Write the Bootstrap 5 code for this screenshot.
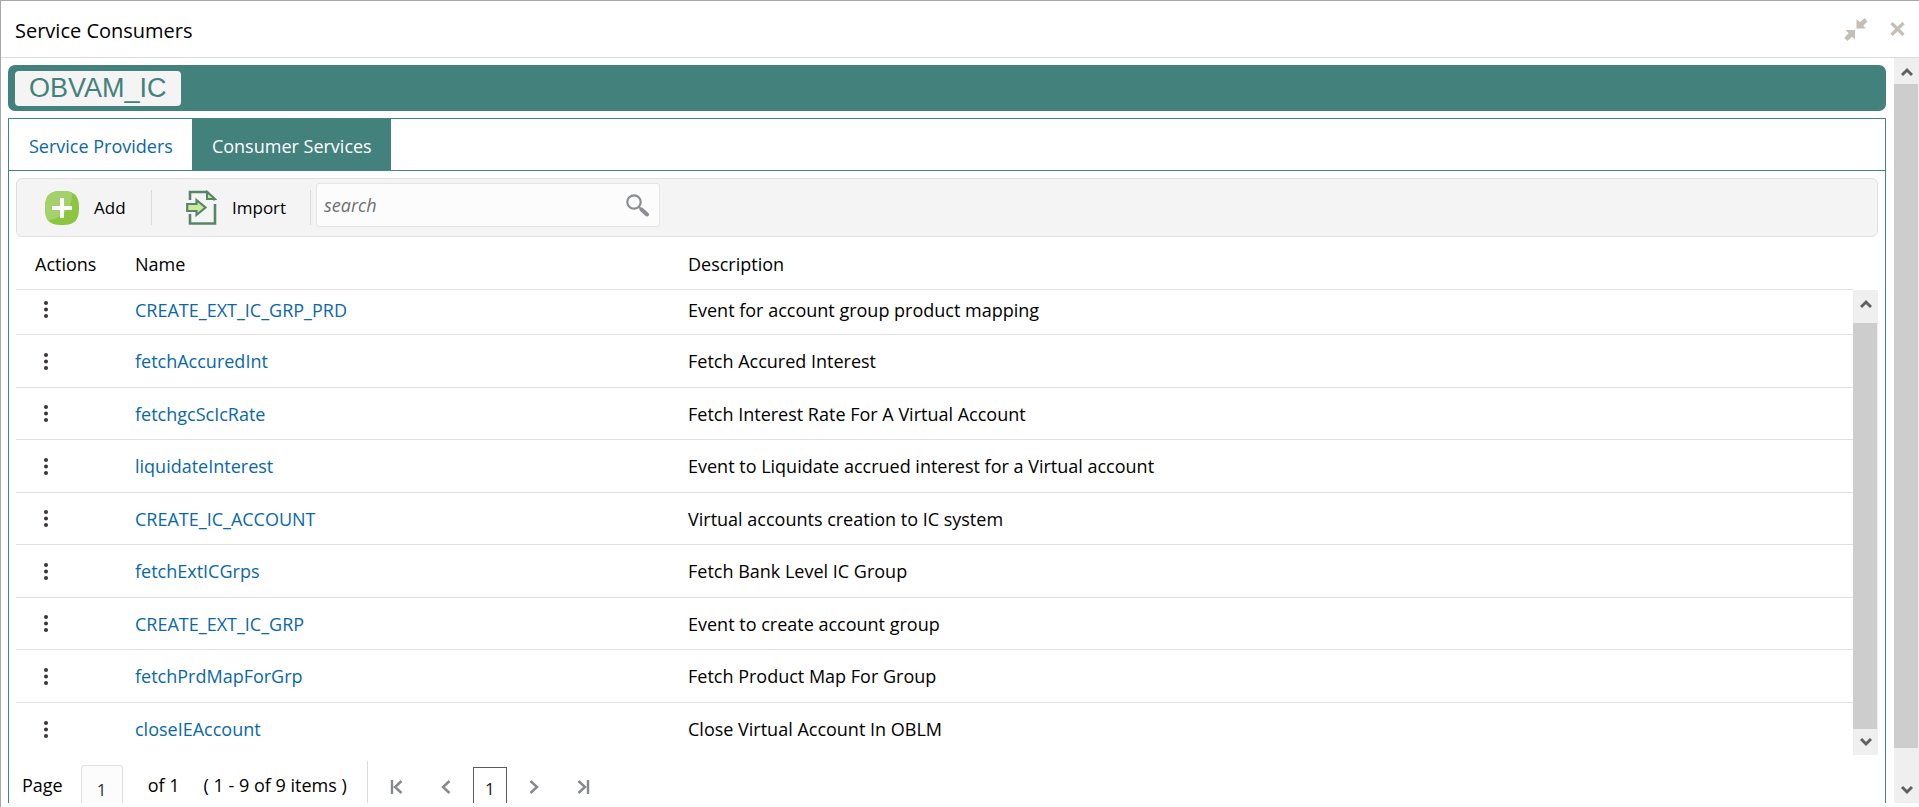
<!DOCTYPE html>
<html lang="en">
<head>
<meta charset="utf-8">
<meta name="viewport" content="width=device-width, initial-scale=1">
<title>Service Consumers</title>
<link href="https://cdn.jsdelivr.net/npm/bootstrap@5.3.0/dist/css/bootstrap.min.css" rel="stylesheet">
<style>
  :root { --teal: #43817d; --line: #e0e0e0; --link: #0968a8; --base: 18px; }
  body { font-family: "Open Sans", "Noto Sans", sans-serif; font-size: var(--base); line-height: 24px; color: #000; background: #fff; }
  a { color: var(--link); text-decoration: none; }
  svg { display: block; }
  .window { border-left: 1px solid #a8a8a8; border-top: 1px solid #a8a8a8; padding-bottom: 4px; }
  .window-head { height: 57px; padding: 0 14px; border-bottom: 1px solid #dcdcdc; }
  .window-head h1 { font-size: 20px; line-height: 28px; font-weight: 400; padding-top: 3px; }
  .plain-btn { border: 0; background: none; padding: 0; color: inherit; }
  .head-tools { gap: 22px; }
  .page-pane { padding: 7px 8px 0 7px; min-width: 0; }
  .title-band { background: var(--teal); border-radius: 7px; padding: 6px 7px 5px; }
  .title-chip { background: #f4f4f4; color: var(--teal); border-radius: 4px; font: 27px/35px "Liberation Sans", Arial, sans-serif; padding: 0 14px; }
  .panel { margin-top: 7px; border: 1px solid #43857c; border-bottom: 0; }
  .tab-strip { border-bottom: 1px solid #43857c; }
  .tab-strip a { padding: 15px 19px 12px 20px; border-radius: 0; }
  .tab-strip a.active { background: var(--teal); color: #fff; }
  .panel-body { padding: 7px 7px 0; }
  .toolbar { background: #f4f4f4; border: 1px solid var(--line); border-radius: 6px; height: 59px; }
  .tool-btn { height: 35px; margin-top: 11px; gap: 15px; border-right: 1px solid #dadada; font-size: 17px; }
  .tool-add { width: 135px; padding-left: 28px; }
  .tool-import { width: 159px; padding-left: 34px; }
  .search-box { width: 344px; height: 44px; margin: 4px 0 0 5px; background: #fcfcfc; border: 1px solid #e4e4e4; border-radius: 3px; padding: 0 10px 0 7px; }
  .search-box input { border: 0; background: none; outline: 0; padding: 0; min-width: 0; font-style: italic; }
  .search-box input::placeholder { color: #707070; }
  .services { table-layout: fixed; border-collapse: separate; border-spacing: 0; }
  .services th, .services td { font-weight: 400; padding: 0; border-bottom: 1px solid var(--line); }
  .services tr > :first-child { width: 119px; padding-left: 19px; }
  .services tr > :nth-child(2) { width: 553px; }
  .services thead th { height: 53px; padding-top: 2px; }
  .services tbody td { height: 53px; }
  .services tbody tr:nth-child(odd) td { height: 52px; }
  .services tbody tr:first-child td { height: 45px; padding-bottom: 5px; }
  .services tbody tr:last-child td { border-bottom: 0; }
  .dots { display: flex; align-items: center; justify-content: center; width: 22px; height: 24px; }
  .bar-track { width: 25px; background: #efefef; }
  .bar-thumb { background: #cdcdcd; margin-right: 1px; flex: 1; }
  .bar-track .plain-btn { display: flex; justify-content: center; color: #606060; }
  .pane-track .up { height: 26px; padding-top: 9px; }
  .pane-track .down { height: 55px; align-items: flex-end; padding-bottom: 8px; }
  .list-track { margin-top: 53px; }
  .list-track .up { height: 33px; padding-top: 9px; }
  .list-track .down { height: 26px; padding-top: 8px; }
  .pager { padding: 6px 0 0 6px; }
  .page-field { width: 42px; height: 48px; margin: 4px 25px 0 18px; border: 1px solid var(--line); border-radius: 3px; background: #fcfcfc; text-align: center; padding: 0; font-size: 17px; color: #333; }
  .pager-text { padding-top: 12px; }
  .pager-rule { width: 1px; height: 52px; background: #dadada; margin-left: 20px; }
  .pager-nav { color: #85888c; padding-left: 22px; }
  .pager-nav .outer-step, .pager-nav .inner-step { height: 16px; margin-top: 18px; }
  .pager-gap { gap: 38px; }
  .page-current { width: 34px; height: 44px; margin: 6px 22px 0; border: 1px solid #5c5c5c; color: #222; text-align: center; font-size: 17px; line-height: 42px; }
</style>
</head>
<body>
<div class="window vh-100 d-flex flex-column overflow-hidden">
  <header class="window-head d-flex align-items-center justify-content-between flex-shrink-0">
    <h1 class="m-0">Service Consumers</h1>
    <div class="head-tools d-flex align-items-center">
      <button class="plain-btn" type="button" aria-label="Collapse">
        <svg width="24" height="24" viewBox="0 0 24 24"><g fill="#c4beb7"><path d="M12.500 2v9.500H22l-2.800-2.800L23.500 4.500 20.500 1l-4.600 4.200z"/><path d="M1.500 13H11v9.500L8.200 19.700 3.500 24 .3 20.800l4.400-4.500z"/></g></svg>
      </button>
      <button class="plain-btn" type="button" aria-label="Close">
        <svg width="15" height="14" viewBox="0 0 15 14"><path d="M1.500 1l12 12M13.500 1l-12 12" stroke="#c4beb7" stroke-width="3.200"/></svg>
      </button>
    </div>
  </header>

  <div class="d-flex flex-grow-1 overflow-hidden">
    <main class="page-pane flex-grow-1 overflow-hidden">
      <div class="title-band d-flex"><div class="title-chip">OBVAM_IC</div></div>
      <section class="panel">
        <nav class="tab-strip d-flex">
          <a href="#providers">Service Providers</a>
          <a href="#services" class="active" aria-current="page">Consumer Services</a>
        </nav>
        <div class="panel-body">
          <div class="toolbar d-flex">
            <button type="button" class="plain-btn tool-btn tool-add d-flex align-items-center">
              <svg width="34" height="34" viewBox="0 0 34 34"><path d="M17 0C28 0 34 3 34 17S28 34 17 34 0 31 0 17 6 0 17 0z" fill="#8cc640"/><path d="M17 0c4 0 7 .4 9.500 1.200C29 13 20 27 3 29.500 1 27 0 23 0 17 0 3 6 0 17 0z" fill="#a5d16c"/><path d="M17 7v20M7 17h20" stroke="#fff" stroke-width="4"/></svg>
              <span>Add</span>
            </button>
            <button type="button" class="plain-btn tool-btn tool-import d-flex align-items-center">
              <svg width="31" height="35" viewBox="0 0 31 35" fill="none" stroke="#588568" stroke-width="2.600"><path d="M4 10V2h17l8 8M4 24v9.500h25V14"/><path d="M21 2v7h8z" fill="#c9ec9c" stroke-width="2"/><path d="M1.200 14h9.300V10l9 7.500-9 7.500v-4H1.200z" fill="#c9ec9c" stroke-width="2.200"/></svg>
              <span>Import</span>
            </button>
            <div class="search-box d-flex align-items-center">
              <input class="flex-grow-1" type="text" placeholder="search" aria-label="Search services">
              <button type="button" class="plain-btn" aria-label="Search"><svg width="23" height="23" viewBox="0 0 23 23" fill="none" stroke="#8a8e92"><circle cx="8" cy="8" r="6.700" stroke-width="2.200"/><path d="M13 13l2.500 2.500" stroke-width="2"/><path d="M15.500 15.500l5.500 5" stroke-width="4" stroke-linecap="round"/></svg></button>
            </div>
          </div>

          <div class="d-flex">
            <table class="services flex-grow-1">
              <thead><tr><th>Actions</th><th>Name</th><th>Description</th></tr></thead>
              <tbody id="service-rows"></tbody>
            </table>
            <div class="bar-track list-track d-flex flex-column">
              <button type="button" class="plain-btn up" aria-label="Scroll list up"><svg width="12" height="10" viewBox="0 0 12 10"><path d="M1 8l5-5 5 5" fill="none" stroke="currentColor" stroke-width="3"/></svg></button>
              <div class="bar-thumb"></div>
              <button type="button" class="plain-btn down" aria-label="Scroll list down"><svg width="12" height="10" viewBox="0 0 12 10"><path d="M1 2l5 5 5-5" fill="none" stroke="currentColor" stroke-width="3"/></svg></button>
            </div>
          </div>

          <div class="pager d-flex">
            <label class="pager-text" for="page-no">Page</label>
            <input class="page-field" id="page-no" type="text" value="1">
            <span class="pager-text">of 1</span>
            <span class="pager-text ms-4">( 1 - 9 of 9 items )</span>
            <div class="pager-rule"></div>
            <div class="pager-nav d-flex">
              <div class="pager-gap d-flex">
                <button type="button" class="plain-btn outer-step" aria-label="First page"><svg width="13" height="16" viewBox="0 0 13 16" fill="none" stroke="currentColor" stroke-width="2.400"><path d="M2 1v14M11.500 2L5 8l6.500 6"/></svg></button>
                <button type="button" class="plain-btn inner-step" aria-label="Previous page"><svg width="10" height="16" viewBox="0 0 10 16" fill="none" stroke="currentColor" stroke-width="2.400"><path d="M8.500 2L2 8l6.500 6"/></svg></button>
              </div>
              <div class="page-current" aria-current="page">1</div>
              <div class="pager-gap d-flex">
                <button type="button" class="plain-btn inner-step" aria-label="Next page"><svg width="10" height="16" viewBox="0 0 10 16" fill="none" stroke="currentColor" stroke-width="2.400"><path d="M1.500 2L8 8l-6.500 6"/></svg></button>
                <button type="button" class="plain-btn outer-step" aria-label="Last page"><svg width="13" height="16" viewBox="0 0 13 16" fill="none" stroke="currentColor" stroke-width="2.400"><path d="M11 1v14M1.500 2L8 8l-6.500 6"/></svg></button>
              </div>
            </div>
          </div>
        </div>
      </section>
    </main>
    <div class="bar-track pane-track d-flex flex-column flex-shrink-0">
      <button type="button" class="plain-btn up" aria-label="Scroll up"><svg width="12" height="10" viewBox="0 0 12 10"><path d="M1 8l5-5 5 5" fill="none" stroke="currentColor" stroke-width="3"/></svg></button>
      <div class="bar-thumb"></div>
      <button type="button" class="plain-btn down" aria-label="Scroll down"><svg width="12" height="10" viewBox="0 0 12 10"><path d="M1 2l5 5 5-5" fill="none" stroke="currentColor" stroke-width="3"/></svg></button>
    </div>
  </div>
</div>
<script src="https://cdn.jsdelivr.net/npm/bootstrap@5.3.0/dist/js/bootstrap.bundle.min.js"></script>
<script>
  const services = [
    ["CREATE_EXT_IC_GRP_PRD", "Event for account group product mapping"],
    ["fetchAccuredInt", "Fetch Accured Interest"],
    ["fetchgcScIcRate", "Fetch Interest Rate For A Virtual Account"],
    ["liquidateInterest", "Event to Liquidate accrued interest for a Virtual account"],
    ["CREATE_IC_ACCOUNT", "Virtual accounts creation to IC system"],
    ["fetchExtICGrps", "Fetch Bank Level IC Group"],
    ["CREATE_EXT_IC_GRP", "Event to create account group"],
    ["fetchPrdMapForGrp", "Fetch Product Map For Group"],
    ["closeIEAccount", "Close Virtual Account In OBLM"]
  ];
  document.getElementById("service-rows").innerHTML = services.map(([name, text]) => `
    <tr>
      <td><button type="button" class="plain-btn dots" aria-label="Actions for ${name}"><svg width="4" height="17" viewBox="0 0 4 17" fill="#3a3532"><circle cx="2" cy="2" r="2"/><circle cx="2" cy="8.500" r="2"/><circle cx="2" cy="15" r="2"/></svg></button></td>
      <td><a href="#${name}">${name}</a></td>
      <td>${text}</td>
    </tr>`).join("");
</script>
</body>
</html>
